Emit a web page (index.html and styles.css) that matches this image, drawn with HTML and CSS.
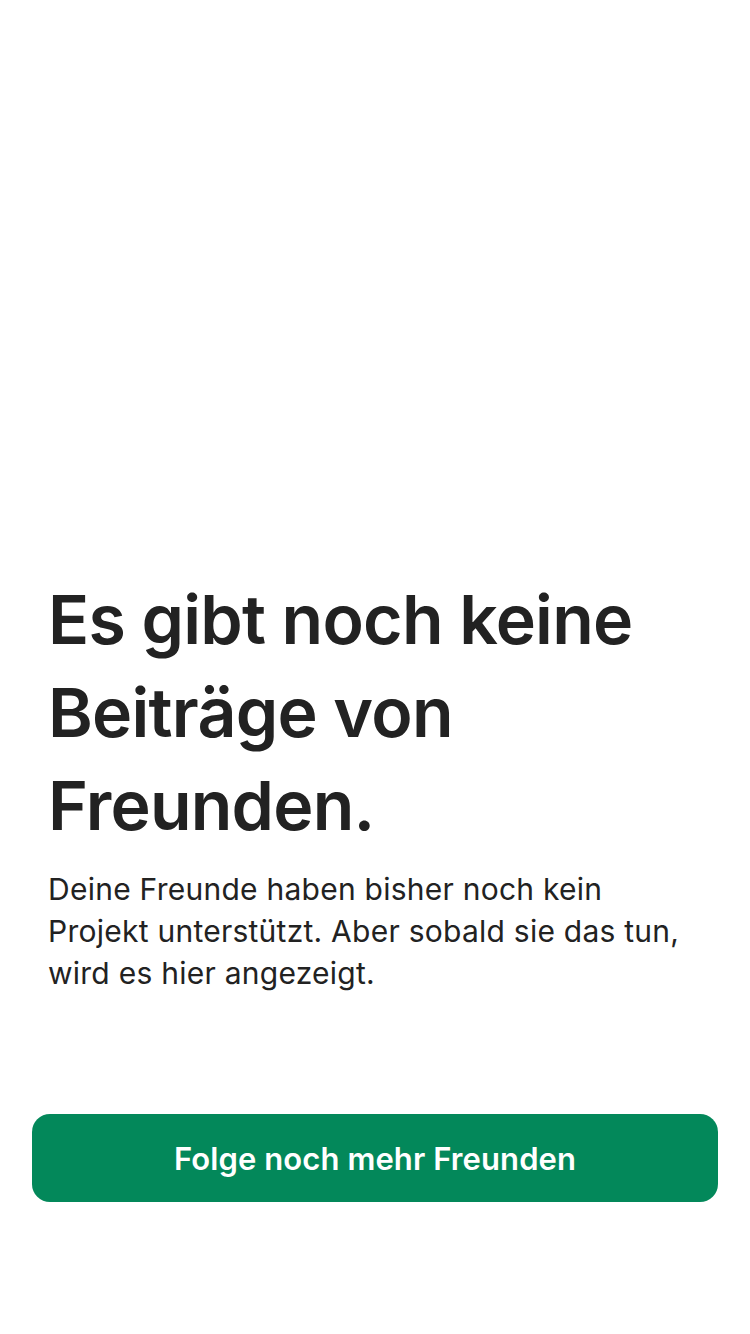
FILE: index.html
```html
<!DOCTYPE html>
<html lang="de">
<head>
<meta charset="utf-8">
<link rel="stylesheet" href="styles.css">
</head>
<body>
<main class="screen">
  <section class="empty">
    <h1 class="title">Es gibt noch keine Beiträge von Freunden.</h1>
    <p class="text">Deine Freunde haben bisher noch kein Projekt unterstützt. Aber sobald sie das tun, wird es hier angezeigt.</p>
  </section>
  <button class="cta">Folge noch mehr Freunden</button>
</main>
</body>
</html>
```
FILE: styles.css
```css
html, body {
  margin: 0;
  padding: 0;
  background: #ffffff;
}
.screen {
  width: 750px;
  height: 1334px;
  box-sizing: border-box;
  display: flex;
  flex-direction: column;
  padding: 573px 32px 0 32px;
  font-family: Inter, "Liberation Sans", sans-serif;
  color: #222222;
}
.empty {
  padding: 0 16px;
}
.title {
  margin: 0;
  font-size: 68px;
  line-height: 93px;
  font-weight: 600;
  letter-spacing: -0.75px;
}
.text {
  margin: 16px 0 0 0;
  font-size: 30px;
  line-height: 42px;
  font-weight: 400;
  color: #222222;
  letter-spacing: 0.25px;
  padding-right: 16px;
}
.cta {
  margin-top: 120px;
  height: 88px;
  border: none;
  border-radius: 18px;
  background: #03885a;
  color: #ffffff;
  font-family: Inter, "Liberation Sans", sans-serif;
  font-size: 31px;
  font-weight: 600;
  letter-spacing: 0.1px;
}
```
